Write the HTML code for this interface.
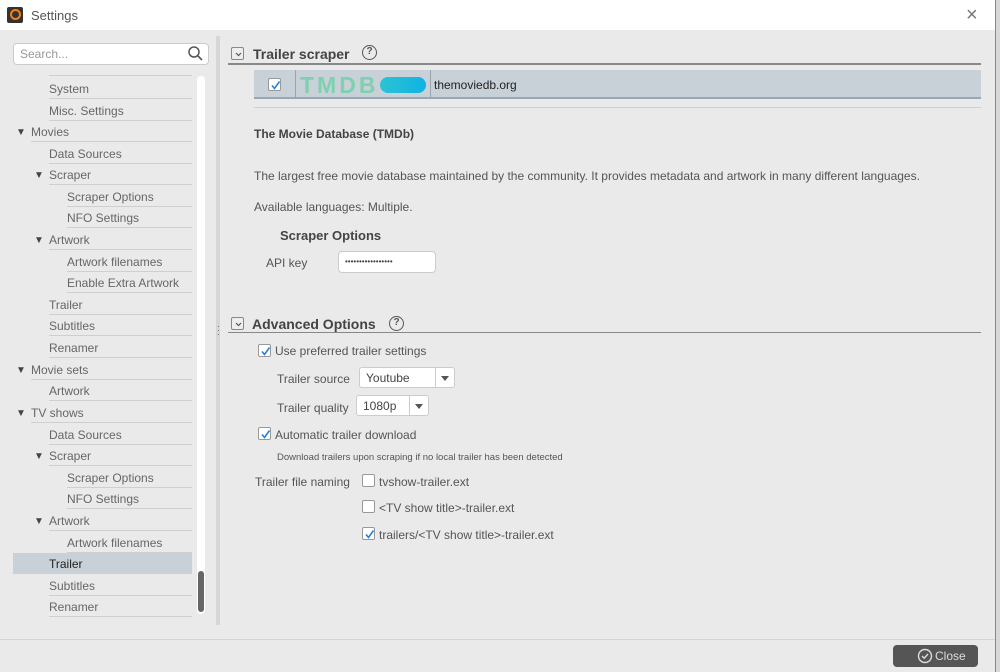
<!DOCTYPE html>
<html><head><meta charset="utf-8"><style>
*{margin:0;padding:0;box-sizing:border-box}
body{width:1000px;height:672px;overflow:hidden;background:#eaeaea;font-family:"Liberation Sans",sans-serif;font-size:12px;color:#555;position:relative}
.a{position:absolute;white-space:nowrap}
.row{position:absolute;height:21px;border-bottom:1px solid #cfcfcf;color:#666;font-size:12px;line-height:22px}
.tri{position:absolute;font-size:10px;color:#444}
.cb{position:absolute;width:13px;height:13px;background:#fff;border:1px solid #999;border-radius:2px}
.cb svg{position:absolute;left:1px;top:1px}
.hdr{font-weight:bold;font-size:14px;color:#444}
.combo{position:absolute;height:21px;background:#fff;border:1px solid #ccc;border-radius:3px;font-size:12px;color:#444;line-height:19px;padding-left:6px}
.combo .arr{position:absolute;right:0;top:0;width:19px;height:19px;border-left:1px solid #ccc}
.combo .arr:after{content:"";position:absolute;left:5px;top:8px;border-left:4px solid transparent;border-right:4px solid transparent;border-top:5px solid #555}
</style></head><body>
<div class="a" style="left:0;top:0;width:995px;height:30px;background:#fff"></div>
<div class="a" style="left:7px;top:7px;width:16px;height:16px;background:#333;border-radius:2px"></div>
<div class="a" style="left:10px;top:9px;width:11px;height:11px;border:2px solid #f08020;border-radius:50%"></div>
<div class="a" style="left:31px;top:8px;font-size:13px;color:#555">Settings</div>
<div class="a" style="left:966px;top:4px;font-size:20px;color:#777">×</div>
<div class="a" style="left:995px;top:0;width:5px;height:672px;background:#d8d8d8;border-left:1px solid #888"></div>
<div class="a" style="left:13px;top:43px;width:196px;height:22px;background:#fff;border:1px solid #ccc;border-radius:4px"></div>
<div class="a" style="left:20px;top:47px;font-size:12px;color:#999">Search...</div>
<svg class="a" style="left:187px;top:45px" width="17" height="17"><circle cx="7" cy="7" r="5" fill="none" stroke="#555" stroke-width="1.5"/><line x1="11" y1="11" x2="15" y2="15" stroke="#555" stroke-width="1.6"/></svg>
<div class="a" style="left:49px;top:75px;width:143px;border-top:1px solid #cfcfcf"></div>
<div class="row" style="left:49px;top:78px;width:143px">System</div>
<div class="row" style="left:49px;top:100px;width:143px">Misc. Settings</div>
<div class="tri" style="left:16px;top:127px">▼</div><div class="row" style="left:31px;top:121px;width:161px">Movies</div>
<div class="row" style="left:49px;top:143px;width:143px">Data Sources</div>
<div class="tri" style="left:34px;top:170px">▼</div><div class="row" style="left:49px;top:164px;width:143px">Scraper</div>
<div class="row" style="left:67px;top:186px;width:125px">Scraper Options</div>
<div class="row" style="left:67px;top:207px;width:125px">NFO Settings</div>
<div class="tri" style="left:34px;top:235px">▼</div><div class="row" style="left:49px;top:229px;width:143px">Artwork</div>
<div class="row" style="left:67px;top:251px;width:125px">Artwork filenames</div>
<div class="row" style="left:67px;top:272px;width:125px">Enable Extra Artwork</div>
<div class="row" style="left:49px;top:294px;width:143px">Trailer</div>
<div class="row" style="left:49px;top:315px;width:143px">Subtitles</div>
<div class="row" style="left:49px;top:337px;width:143px">Renamer</div>
<div class="tri" style="left:16px;top:365px">▼</div><div class="row" style="left:31px;top:359px;width:161px">Movie sets</div>
<div class="row" style="left:49px;top:380px;width:143px">Artwork</div>
<div class="tri" style="left:16px;top:408px">▼</div><div class="row" style="left:31px;top:402px;width:161px">TV shows</div>
<div class="row" style="left:49px;top:424px;width:143px">Data Sources</div>
<div class="tri" style="left:34px;top:451px">▼</div><div class="row" style="left:49px;top:445px;width:143px">Scraper</div>
<div class="row" style="left:67px;top:467px;width:125px">Scraper Options</div>
<div class="row" style="left:67px;top:488px;width:125px">NFO Settings</div>
<div class="tri" style="left:34px;top:516px">▼</div><div class="row" style="left:49px;top:510px;width:143px">Artwork</div>
<div class="row" style="left:67px;top:532px;width:125px">Artwork filenames</div>
<div class="a" style="left:13px;top:553px;width:179px;height:21px;background:#c9d1d8"></div>
<div class="row" style="left:49px;top:553px;width:143px;color:#222;border-bottom:none">Trailer</div>
<div class="row" style="left:49px;top:575px;width:143px">Subtitles</div>
<div class="row" style="left:49px;top:596px;width:143px">Renamer</div>
<div class="a" style="left:197px;top:76px;width:8px;height:538px;background:#fff;border-radius:4px"></div>
<div class="a" style="left:198px;top:571px;width:6px;height:41px;background:#666;border-radius:3px"></div>
<div class="a" style="left:216px;top:36px;width:4px;height:589px;background:#d6d6d6"></div>
<div class="a" style="left:217px;top:325px;font-size:8px;line-height:4px;color:#444">·<br>·<br>·</div>
<div class="cb" style="left:231px;top:47px;border-color:#888;background:#eee"><svg width="11" height="11"><path d="M3 4 L5.5 6.5 L8 4" fill="none" stroke="#555" stroke-width="1.2"/></svg></div>
<div class="a hdr" style="left:253px;top:46px">Trailer scraper</div>
<div class="a" style="left:362px;top:45px;width:15px;height:15px;border:1.5px solid #555;border-radius:50%;font-size:10px;font-weight:bold;text-align:center;line-height:12px;color:#555">?</div>
<div class="a" style="left:228px;top:63px;width:753px;border-top:2px solid #888"></div>
<div class="a" style="left:254px;top:70px;width:727px;height:29px;background:#c9d1d8;border-bottom:2px solid #9aa6b0"></div>
<div class="a" style="left:295px;top:70px;height:28px;border-left:1px solid #98a4ae"></div>
<div class="a" style="left:430px;top:70px;height:28px;border-left:1px solid #98a4ae"></div>
<div class="cb" style="left:268px;top:78px"><svg width="11" height="11"><path d="M2 5.5 L4.5 8.5 L9.5 1.5" fill="none" stroke="#2a7fd4" stroke-width="1.6"/></svg></div>
<div class="a" style="left:300px;top:72px;font-size:23px;font-weight:bold;letter-spacing:3px;color:#7ed0b0">TMDB</div>
<div class="a" style="left:380px;top:77px;width:46px;height:16px;border-radius:8px;background:linear-gradient(90deg,#2cc3d4,#0fb2e2)"></div>
<div class="a" style="left:434px;top:78px;color:#222">themoviedb.org</div>
<div class="a" style="left:254px;top:107px;width:727px;border-top:1px solid #d0d0d0"></div>
<div class="a" style="left:254px;top:127px;font-weight:bold;color:#444">The Movie Database (TMDb)</div>
<div class="a" style="left:254px;top:169px">The largest free movie database maintained by the community. It provides metadata and artwork in many different languages.</div>
<div class="a" style="left:254px;top:200px">Available languages: Multiple.</div>
<div class="a" style="left:280px;top:228px;font-weight:bold;font-size:13px;color:#444">Scraper Options</div>
<div class="a" style="left:266px;top:256px">API key</div>
<div class="a" style="left:338px;top:251px;width:98px;height:22px;background:#fff;border:1px solid #ccc;border-radius:4px;font-size:8px;line-height:20px;padding-left:6px;color:#444;letter-spacing:0">•••••••••••••••••</div>
<div class="cb" style="left:231px;top:317px;border-color:#888;background:#eee"><svg width="11" height="11"><path d="M3 4 L5.5 6.5 L8 4" fill="none" stroke="#555" stroke-width="1.2"/></svg></div>
<div class="a hdr" style="left:252px;top:316px">Advanced Options</div>
<div class="a" style="left:389px;top:316px;width:15px;height:15px;border:1.5px solid #555;border-radius:50%;font-size:10px;font-weight:bold;text-align:center;line-height:12px;color:#555">?</div>
<div class="a" style="left:228px;top:332px;width:753px;border-top:1px solid #888"></div>
<div class="cb" style="left:258px;top:344px"><svg width="11" height="11"><path d="M2 5.5 L4.5 8.5 L9.5 1.5" fill="none" stroke="#2a7fd4" stroke-width="1.6"/></svg></div>
<div class="a" style="left:275px;top:344px">Use preferred trailer settings</div>
<div class="a" style="left:277px;top:372px">Trailer source</div>
<div class="combo" style="left:359px;top:367px;width:96px;line-height:21px">Youtube<div class="arr"></div></div>
<div class="a" style="left:277px;top:401px">Trailer quality</div>
<div class="combo" style="left:356px;top:395px;width:73px;line-height:21px">1080p<div class="arr"></div></div>
<div class="cb" style="left:258px;top:427px"><svg width="11" height="11"><path d="M2 5.5 L4.5 8.5 L9.5 1.5" fill="none" stroke="#2a7fd4" stroke-width="1.6"/></svg></div>
<div class="a" style="left:275px;top:428px">Automatic trailer download</div>
<div class="a" style="left:277px;top:452px;font-size:9.5px">Download trailers upon scraping if no local trailer has been detected</div>
<div class="a" style="left:255px;top:475px">Trailer file naming</div>
<div class="cb" style="left:362px;top:474px"></div>
<div class="a" style="left:379px;top:475px">tvshow-trailer.ext</div>
<div class="cb" style="left:362px;top:500px"></div>
<div class="a" style="left:379px;top:501px">&lt;TV show title&gt;-trailer.ext</div>
<div class="cb" style="left:362px;top:527px"><svg width="11" height="11"><path d="M2 5.5 L4.5 8.5 L9.5 1.5" fill="none" stroke="#2a7fd4" stroke-width="1.6"/></svg></div>
<div class="a" style="left:379px;top:528px">trailers/&lt;TV show title&gt;-trailer.ext</div>
<div class="a" style="left:0;top:639px;width:995px;border-top:1px solid #d4d4d4"></div>
<div class="a" style="left:893px;top:645px;width:85px;height:22px;background:#555;border-radius:4px;color:#ddd;font-size:12px;line-height:23px;padding-left:42px">Close</div>
<svg class="a" style="left:917px;top:648px" width="16" height="16"><circle cx="8" cy="8" r="6.5" fill="none" stroke="#ddd" stroke-width="1.4"/><path d="M5 8 L7.2 10.2 L11 6" fill="none" stroke="#ddd" stroke-width="1.4"/></svg>
</body></html>
